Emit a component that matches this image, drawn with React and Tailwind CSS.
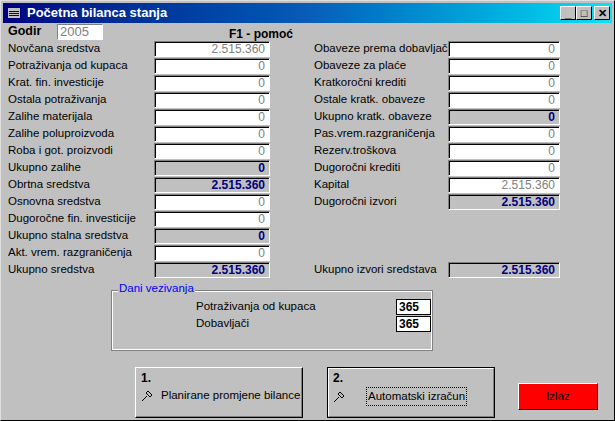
const L = [
  ["Novčana sredstva", "2.515.360", "w"],
  ["Potraživanja od kupaca", "0", "w"],
  ["Krat. fin. investicije", "0", "w"],
  ["Ostala potraživanja", "0", "w"],
  ["Zalihe materijala", "0", "w"],
  ["Zalihe poluproizvoda", "0", "w"],
  ["Roba i got. proizvodi", "0", "w"],
  ["Ukupno zalihe", "0", "g"],
  ["Obrtna sredstva", "2.515.360", "g"],
  ["Osnovna sredstva", "0", "w"],
  ["Dugoročne fin. investicije", "0", "w"],
  ["Ukupno stalna sredstva", "0", "g"],
  ["Akt. vrem. razgraničenja", "0", "w"],
];
const R = [
  ["Obaveze prema dobavljačima", "0", "w"],
  ["Obaveze za plaće", "0", "w"],
  ["Kratkoročni krediti", "0", "w"],
  ["Ostale kratk. obaveze", "0", "w"],
  ["Ukupno kratk. obaveze", "0", "g"],
  ["Pas.vrem.razgraničenja", "0", "w"],
  ["Rezerv.troškova", "0", "w"],
  ["Dugoročni krediti", "0", "w"],
  ["Kapital", "2.515.360", "w"],
  ["Dugoročni  izvori", "2.515.360", "g"],
];

function Box({ v, t, w }) {
  const g = t === "g";
  return (
    <div
      className={`h-[16px] ${w} border-t border-l border-[#808080] border-b border-r border-b-white border-r-white shrink-0`}
    >
      <div className={`h-full border-t border-l border-black flex items-center justify-end pr-[4px] ${g ? "bg-[#c0c0c0] text-[#000080] font-bold" : "bg-white text-[#808080]"} text-[12px] leading-none`}>
        {v}
      </div>
    </div>
  );
}

function Row({ l, v, t, lw, bw }) {
  return (
    <div className="h-[17px] flex items-center">
      <div className={`${lw} overflow-hidden whitespace-nowrap`}>{l}</div>
      <Box v={v} t={t} w={bw} />
    </div>
  );
}

function Wrench() {
  return (
    <svg width="12" height="12" viewBox="0 0 12 12" className="shrink-0">
      <path d="M1 11 L6 6 M5 3 L9 7 M7 1 L11 5 M7 1 L5 3 M9 7 L11 5" stroke="#000" strokeWidth="1" fill="none" />
    </svg>
  );
}

export default function App() {
  return (
    <div
      className="w-[615px] h-[421px] bg-[#c0c0c0] relative overflow-hidden text-[11.5px] text-black border border-t-[#dfdfdf] border-l-[#dfdfdf] border-b-black border-r-black"
      style={{ fontFamily: '"Liberation Sans", Arial, sans-serif' }}
    >
      <div className="h-[20px] mx-[2px] mt-[2px] bg-gradient-to-r from-[#000080] via-[#0a5cb8] to-[#12e0f5] flex items-center pl-[4px] pr-[2px]">
        <div className="w-[14px] h-[12px] bg-[#c0c0c0] border border-[#000080] mr-[6px] flex flex-col justify-center gap-[1px] px-[1px]">
          <div className="h-[1px] bg-[#000080]" /><div className="h-[1px] bg-[#000080]" /><div className="h-[1px] bg-[#000080]" />
        </div>
        <span className="text-white font-bold text-[13px] flex-1">Početna bilanca stanja</span>
        {["_", "□", "✕"].map((c, i) => (
          <div key={i} className={`w-[16px] h-[14px] bg-[#c0c0c0] border border-t-white border-l-white border-b-black border-r-black flex items-center justify-center text-[11px] font-bold leading-none ${i === 2 ? "ml-[2px]" : ""}`}>{c}</div>
        ))}
      </div>
      <div className="flex items-center h-[17px] pl-[7px]">
        <span className="font-bold text-[12.5px] w-[49px]">Godir</span>
        <div className="w-[46px] h-[16px] bg-white border border-t-[#808080] border-l-[#808080] border-b-white border-r-white text-[#808080] text-[13px] leading-[14px] pl-[2px]">2005</div>
        <span className="font-bold text-[12px] ml-[126px] mt-[4px]">F1 - pomoć</span>
      </div>
      <div className="flex pl-[7px]">
        <div className="flex flex-col">
          {L.map(([l, v, t]) => <Row key={l} l={l} v={v} t={t} lw="w-[146px]" bw="w-[116px]" />)}
        </div>
        <div className="flex flex-col ml-[44px]">
          {R.map(([l, v, t]) => <Row key={l} l={l} v={v} t={t} lw="w-[134px]" bw="w-[112px]" />)}
        </div>
      </div>
      <div className="flex pl-[7px] items-center h-[17px]">
        <div className="w-[146px]">Ukupno sredstva</div>
        <Box v="2.515.360" t="g" w="w-[116px]" />
        <div className="w-[134px] ml-[44px]">Ukupno izvori sredstava</div>
        <Box v="2.515.360" t="g" w="w-[112px]" />
      </div>
      <div className="ml-[110px] mt-[12px] w-[322px] h-[61px] border border-[#808080] relative">
        <div className="absolute inset-0 border border-white pointer-events-none" />
        <span className="absolute -top-[8px] left-[6px] bg-[#c0c0c0] text-[#0000ff] px-[1px] leading-none">Dani vezivanja</span>
        <div className="flex flex-col pl-[84px] pt-[8px] gap-[1px]">
          {["Potraživanja od kupaca", "Dobavljači"].map((l) => (
            <div key={l} className="flex items-center h-[16px]">
              <span className="w-[200px]">{l}</span>
              <div className="w-[35px] h-[16px] bg-white border border-black font-bold text-[12px] leading-[14px] pl-[2px]">365</div>
            </div>
          ))}
        </div>
      </div>
      <div className="flex items-start ml-[134px] mt-[16px] whitespace-nowrap">
        <div className="w-[168px] h-[51px] border border-t-white border-l-white border-b-black border-r-black">
          <div className="h-full border-b border-r border-[#808080] px-[5px] pt-[1px]">
            <div className="font-bold text-[12px]">1.</div>
            <div className="flex items-center gap-[8px]"><Wrench /><span>Planirane promjene bilance</span></div>
          </div>
        </div>
        <div className="w-[168px] h-[51px] ml-[24px] border border-black">
          <div className="h-full border border-t-white border-l-white border-b-[#808080] border-r-[#808080] px-[4px]">
            <div className="font-bold text-[12px]">2.</div>
            <div className="flex items-center"><Wrench /><span className="ml-[21px] border border-dotted border-black px-[1px]">Automatski izračun</span></div>
          </div>
        </div>
        <div className="w-[80px] h-[27px] ml-[23px] mt-[16px] bg-[#ff0000] border border-t-white border-l-white border-b-black border-r-black flex items-center justify-center">Izlaz</div>
      </div>
    </div>
  );
}
